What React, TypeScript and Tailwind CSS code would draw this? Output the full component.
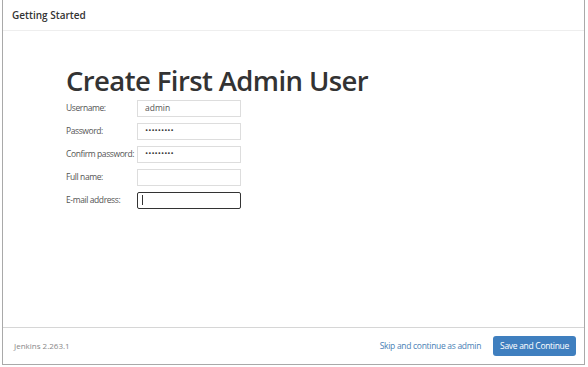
export default function App() {
  const rows = [
    { label: 'Username:', value: 'admin', type: 'text' },
    { label: 'Password:', value: '•••••••••', type: 'pw' },
    { label: 'Confirm password:', value: '•••••••••', type: 'pw' },
    { label: 'Full name:', value: '', type: 'text' },
    { label: 'E-mail address:', value: '', type: 'focus' },
  ]

  return (
    <div className="w-[588px] h-[367px] bg-white font-['Open_Sans',sans-serif] text-[#333]">
      <div className="ml-[2px] w-[583px] h-[365px] border-x border-b border-[#a9a9a9] flex flex-col">
        {/* Header */}
        <div className="h-[31px] border-b border-[#eeeeee] flex items-center pl-[9px]">
          <span className="text-[10px] font-semibold text-[#333]">Getting Started</span>
        </div>

        {/* Body */}
        <div className="flex-1 pl-[63px] pt-[33px]">
          <h1 className="text-[27.5px] leading-[34px] font-semibold text-[#333] tracking-[-0.6px]">Create First Admin User</h1>
          <div className="mt-[2px] flex flex-col gap-[7px]">
            {rows.map((row) => (
              <div key={row.label} className="flex items-center h-[16px]">
                <span className="w-[71px] text-[8.5px] tracking-[-0.4px] text-[#555] whitespace-nowrap">{row.label}</span>
                <div
                  className={
                    row.type === 'focus'
                      ? 'w-[104px] h-[17px] border-[1.5px] border-[#333] rounded-[2px] flex items-center pl-[4px]'
                      : 'w-[104px] h-[17px] border border-[#dddddd] flex items-center pl-[7px]'
                  }
                >
                  {row.type === 'focus' && <span className="w-px h-[10px] bg-[#333]" />}
                  {row.type === 'pw' && (
                    <span className="text-[5px] font-bold text-[#333] font-['DejaVu_Sans',sans-serif]">{row.value}</span>
                  )}
                  {row.type === 'text' && <span className="text-[8.5px] text-[#555]">{row.value}</span>}
                </div>
              </div>
            ))}
          </div>
        </div>

        {/* Footer */}
        <div className="h-[37px] border-t border-[#d6d6d6] flex items-center pl-[11px] pr-[8px]">
          <span className="text-[8px] text-[#888]">Jenkins 2.263.1</span>
          <div className="ml-auto flex items-center gap-[12px]">
            <span className="text-[8.5px] tracking-[-0.3px] text-[#4a7fb5]">Skip and continue as admin</span>
            <button className="h-[20px] px-[7px] bg-[#3f7fbf] text-white text-[8.5px] tracking-[-0.3px] rounded-[3px]">
              Save and Continue
            </button>
          </div>
        </div>
      </div>
    </div>
  )
}
